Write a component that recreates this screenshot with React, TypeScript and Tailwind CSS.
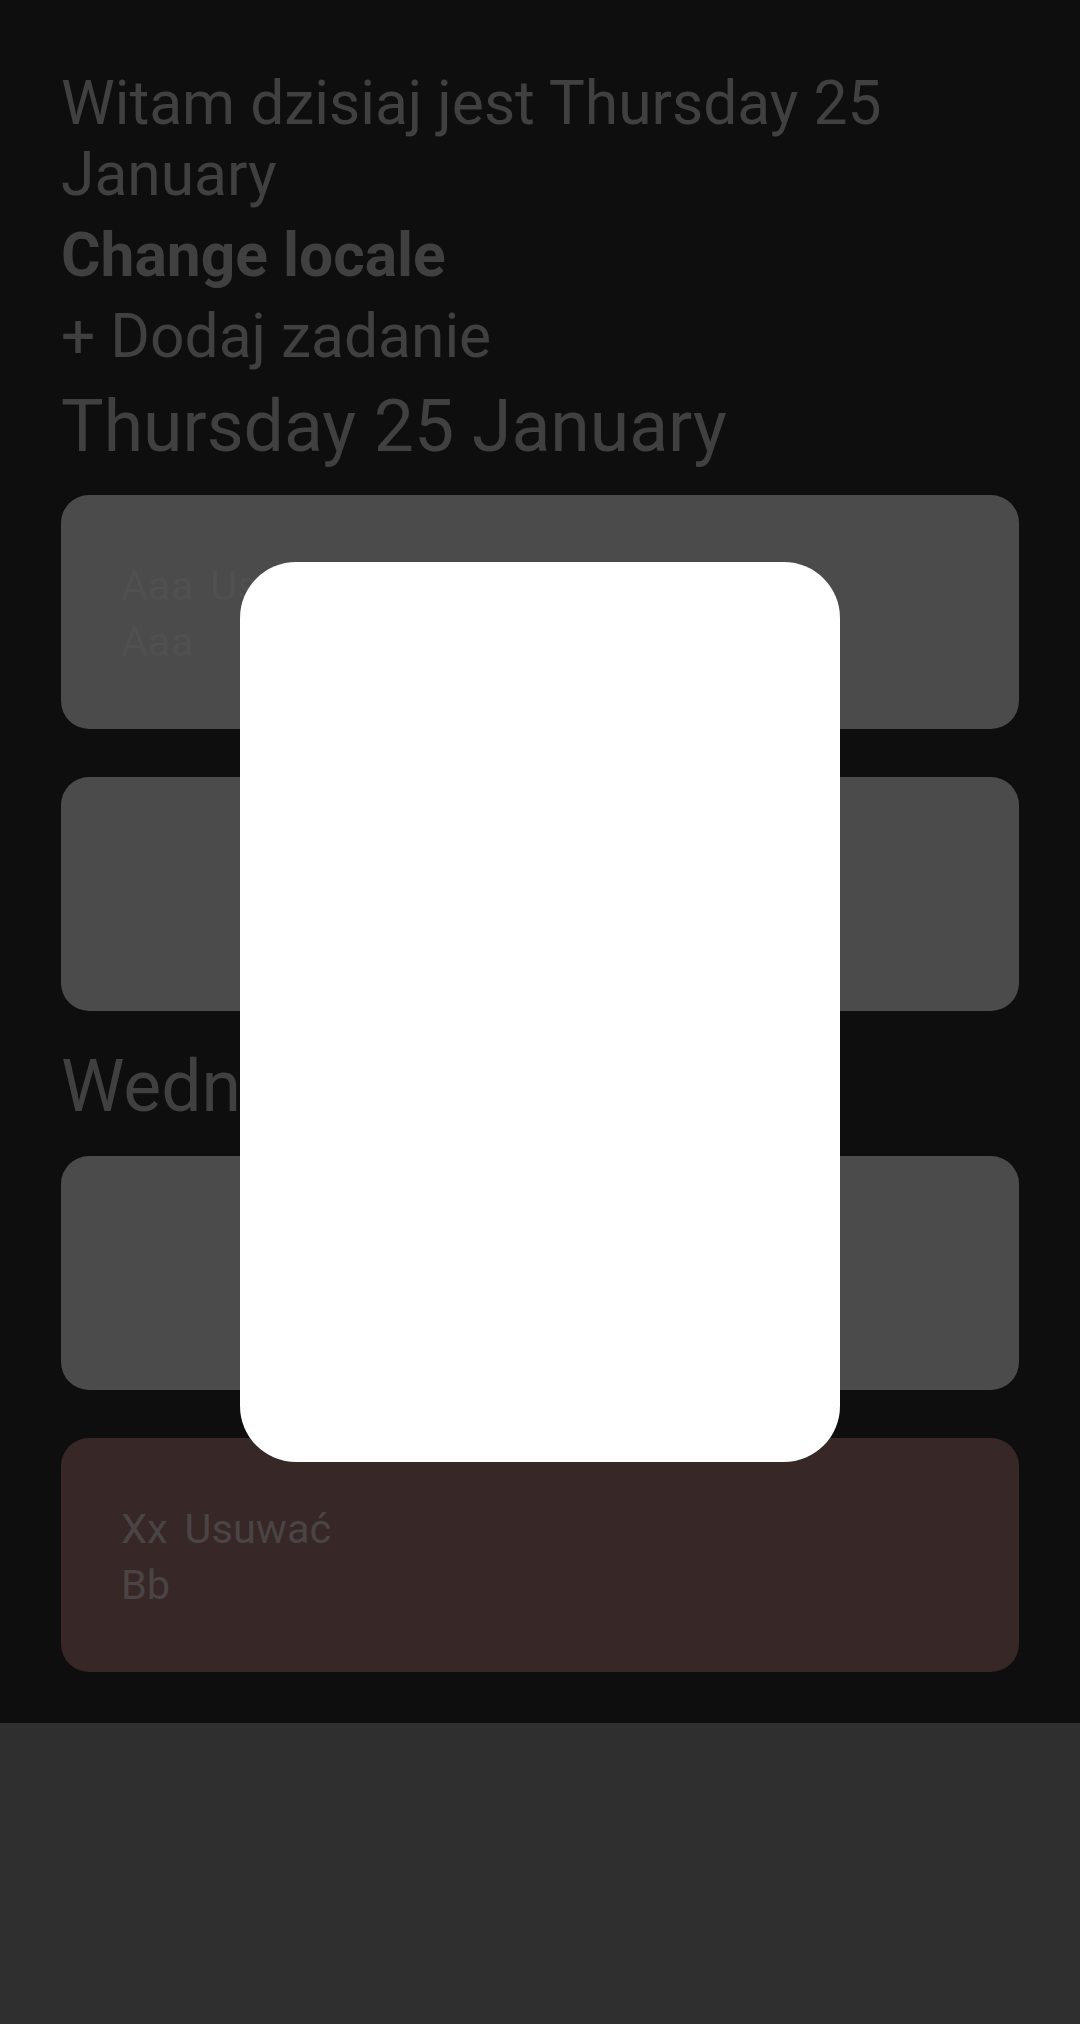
import React from 'react';

type Task = {
    title: string;
    action: string;
    description: string;
    tone: 'normal' | 'overdue';
};

const days: { label: string; tasks: Task[] }[] = [
    {
        label: 'Thursday 25 January',
        tasks: [
            { title: 'Aaa', action: 'Usuwać', description: 'Aaa', tone: 'normal' },
            { title: '', action: '', description: '', tone: 'normal' },
        ],
    },
    {
        label: 'Wednesday 24 January',
        tasks: [
            { title: '', action: '', description: '', tone: 'normal' },
            { title: 'Xx', action: 'Usuwać', description: 'Bb', tone: 'overdue' },
        ],
    },
];

function TaskCard({ task }: { task: Task }) {
    const overdue = task.tone === 'overdue';
    return (
        <div
            className={
                overdue
                    ? 'h-[234px] rounded-[28px] bg-[#372727] px-[60px] pt-[67px] text-[#4a4444]'
                    : 'h-[234px] rounded-[28px] bg-[#4b4b4b] px-[60px] pt-[67px] text-[#505050]'
            }
        >
            {task.title && (
                <div className="flex gap-[17px] text-[41.5px] leading-[48px]">
                    <span>{task.title}</span>
                    <button className="leading-[48px]">{task.action}</button>
                </div>
            )}
            {task.description && (
                <p className="mt-[8px] text-[41.5px] leading-[48px]">{task.description}</p>
            )}
        </div>
    );
}

export default function App() {
    return (
        <div className="min-h-screen bg-[#2f2f2f] font-['Roboto',sans-serif]">
            <main className="bg-[#0e0e0e] px-[61px] pt-[68px] pb-[51px] text-[#404040]">
                <h1 className="text-[60.5px] leading-[71px]">Witam dzisiaj jest Thursday 25 January</h1>
                <button className="mt-[10px] block text-[60.5px] font-bold leading-[71px]">Change locale</button>
                <button className="mt-[10px] block text-[60.5px] leading-[71px]">+ Dodaj zadanie</button>

                <h2 className="mt-[13px] text-[71.5px] leading-[84px]">{days[0].label}</h2>
                <div className="mt-[26px] flex flex-col gap-[48px]">
                    {days[0].tasks.map((t, i) => (
                        <TaskCard key={i} task={t} />
                    ))}
                </div>

                <h2 className="mt-[34px] text-[71.5px] leading-[84px] whitespace-nowrap">{days[1].label}</h2>
                <div className="mt-[27px] flex flex-col gap-[48px]">
                    {days[1].tasks.map((t, i) => (
                        <TaskCard key={i} task={t} />
                    ))}
                </div>
            </main>

            {/* dialog, still loading its content */}
            <div className="fixed inset-0 flex items-center justify-center">
                <div className="h-[900px] w-[600px] rounded-[56px] bg-white" />
            </div>
        </div>
    );
}
